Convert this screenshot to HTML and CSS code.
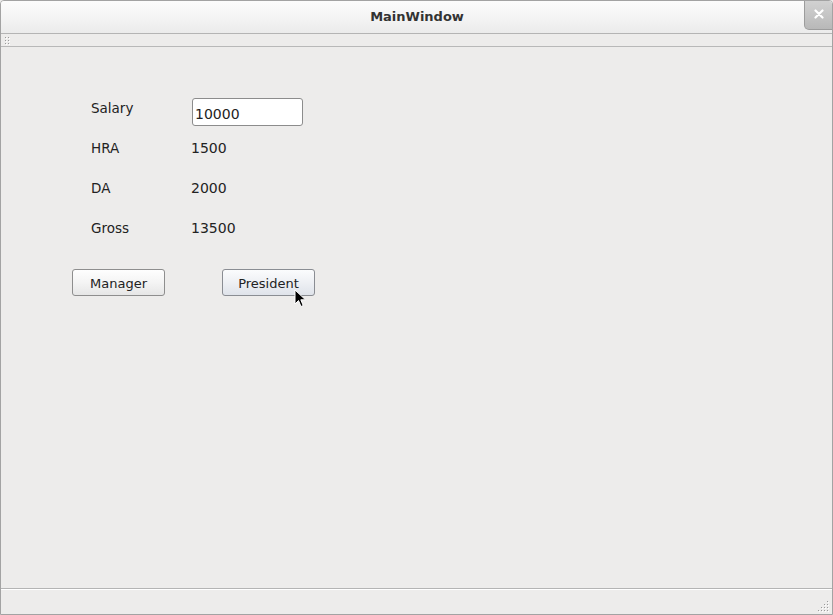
FILE: index.html
```html
<!DOCTYPE html>
<html>
<head>
<meta charset="utf-8">
<title>MainWindow</title>
<link rel="stylesheet" href="styles.css">
</head>
<body>
<div class="window">
  <div class="titlebar">
    <span class="title">MainWindow</span>
    <div class="close">
      <svg width="10" height="10" viewBox="0 0 10 10"><path d="M1.5 1.5 L8.5 8.5 M8.5 1.5 L1.5 8.5" stroke="#ffffff" stroke-width="2.2" stroke-linecap="round"/></svg>
    </div>
  </div>
  <div class="toolbar">
    <svg class="grip" width="6" height="9" viewBox="0 0 6 9">
      <rect x="0" y="0" width="1" height="1" fill="#9a9a9a"/><rect x="1" y="1" width="1" height="1" fill="#ffffff"/>
      <rect x="3" y="0" width="1" height="1" fill="#9a9a9a"/><rect x="4" y="1" width="1" height="1" fill="#ffffff"/>
      <rect x="0" y="3" width="1" height="1" fill="#9a9a9a"/><rect x="1" y="4" width="1" height="1" fill="#ffffff"/>
      <rect x="3" y="3" width="1" height="1" fill="#9a9a9a"/><rect x="4" y="4" width="1" height="1" fill="#ffffff"/>
      <rect x="0" y="6" width="1" height="1" fill="#9a9a9a"/><rect x="1" y="7" width="1" height="1" fill="#ffffff"/>
      <rect x="3" y="6" width="1" height="1" fill="#9a9a9a"/><rect x="4" y="7" width="1" height="1" fill="#ffffff"/>
    </svg>
  </div>
  <div class="content">
    <div class="form">
      <div class="label first">Salary</div>
      <div class="value"><input class="field" type="text" value="10000"></div>
      <div class="label">HRA</div>
      <div class="value">1500</div>
      <div class="label">DA</div>
      <div class="value">2000</div>
      <div class="label">Gross</div>
      <div class="value">13500</div>
    </div>
    <div class="buttons">
      <button class="btn">Manager</button>
      <button class="btn hover">President</button>
    </div>
  </div>
  <div class="statusbar">
    <svg class="sizegrip" width="12" height="12" viewBox="0 0 12 12">
      <rect x="9" y="0" width="1" height="1" fill="#9a9a9a"/><rect x="10" y="1" width="1" height="1" fill="#ffffff"/>
      <rect x="6" y="3" width="1" height="1" fill="#9a9a9a"/><rect x="7" y="4" width="1" height="1" fill="#ffffff"/>
      <rect x="9" y="3" width="1" height="1" fill="#9a9a9a"/><rect x="10" y="4" width="1" height="1" fill="#ffffff"/>
      <rect x="3" y="6" width="1" height="1" fill="#9a9a9a"/><rect x="4" y="7" width="1" height="1" fill="#ffffff"/>
      <rect x="6" y="6" width="1" height="1" fill="#9a9a9a"/><rect x="7" y="7" width="1" height="1" fill="#ffffff"/>
      <rect x="9" y="6" width="1" height="1" fill="#9a9a9a"/><rect x="10" y="7" width="1" height="1" fill="#ffffff"/>
      <rect x="0" y="9" width="1" height="1" fill="#9a9a9a"/><rect x="1" y="10" width="1" height="1" fill="#ffffff"/>
      <rect x="3" y="9" width="1" height="1" fill="#9a9a9a"/><rect x="4" y="10" width="1" height="1" fill="#ffffff"/>
      <rect x="6" y="9" width="1" height="1" fill="#9a9a9a"/><rect x="7" y="10" width="1" height="1" fill="#ffffff"/>
      <rect x="9" y="9" width="1" height="1" fill="#9a9a9a"/><rect x="10" y="10" width="1" height="1" fill="#ffffff"/>
    </svg>
  </div>
  <svg class="cursor" width="14" height="20" viewBox="0 0 14 20">
    <path d="M1 1 L1 15 L4.5 11.5 L7 17.5 L9.2 16.5 L6.8 10.8 L11.5 10.8 Z" fill="#000000" stroke="#ffffff" stroke-width="1" stroke-linejoin="miter"/>
  </svg>
</div>
</body>
</html>
```

FILE: styles.css
```css
html, body {
  margin: 0;
  padding: 0;
  background: #edeceb;
}

.window {
  position: relative;
  width: 833px;
  height: 615px;
  box-sizing: border-box;
  border: 1px solid #a3a3a3;
  border-radius: 4px 4px 0 0;
  overflow: hidden;
  display: flex;
  flex-direction: column;
  background: #edeceb;
  font-family: "DejaVu Sans", sans-serif;
  font-size: 13px;
  color: #222222;
}

.titlebar {
  position: relative;
  height: 32px;
  flex: none;
  border-bottom: 1px solid #b4b4b4;
  background: linear-gradient(to bottom, #fcfcfc 0%, #f6f6f6 40%, #ebebeb 100%);
  display: flex;
  align-items: center;
  justify-content: center;
}

.title {
  font-weight: bold;
  font-size: 13px;
  color: #333333;
  margin-top: -1px;
  padding-left: 1px;
}

.close {
  position: absolute;
  right: -1px;
  top: -1px;
  width: 29px;
  height: 30px;
  box-sizing: border-box;
  border: 1px solid #9c9c9c;
  border-top: none;
  border-radius: 0 0 0 5px;
  background: linear-gradient(to bottom, #d2d2d2 0%, #c3c3c3 60%, #b8b8b8 100%);
  display: flex;
  align-items: center;
  justify-content: center;
}

.close svg {
  display: block;
  margin-top: -1px;
}

.toolbar {
  height: 12px;
  flex: none;
  border-bottom: 1px solid #b8b8b8;
  display: flex;
  align-items: flex-start;
}

.grip {
  display: block;
  margin: 3px 0 0 4px;
}

.content {
  flex: 1;
  padding: 51px 0 0 71px;
}

.form {
  display: grid;
  grid-template-columns: 100px 111px;
  grid-template-rows: 24px 28px 28px 28px;
  row-gap: 12px;
  margin-left: 19px;
}

.label,
.value {
  line-height: 28px;
  white-space: nowrap;
}

.label {
  font-size: 13.5px;
}

.value {
  font-size: 14px;
}

.label.first {
  line-height: 20px;
}

.field {
  display: block;
  box-sizing: border-box;
  width: 111px;
  height: 28px;
  margin: 0 0 0 1px;
  padding: 4px 2px 0 2px;
  border: 1px solid #8c8c8c;
  border-radius: 3px;
  background: #ffffff;
  font-family: "DejaVu Sans", sans-serif;
  font-size: 14px;
  color: #222222;
  outline: none;
}

.buttons {
  display: flex;
  gap: 57px;
  margin-top: 27px;
}

.btn {
  box-sizing: border-box;
  width: 93px;
  height: 27px;
  padding: 2px 0 0 0;
  border: 1px solid #8e8e8e;
  border-radius: 3px;
  background: linear-gradient(to bottom, #fefefe 0%, #f4f4f4 50%, #e6e6e6 100%);
  font-family: "DejaVu Sans", sans-serif;
  font-size: 13px;
  color: #222222;
}

.btn.hover {
  border-color: #8a8d93;
  background: linear-gradient(to bottom, #fbfcfd 0%, #eef0f4 50%, #dfe3ea 100%);
}

.statusbar {
  height: 25px;
  flex: none;
  border-top: 1px solid #b4b4b4;
  box-shadow: inset 0 1px 0 #ffffff;
  display: flex;
  justify-content: flex-end;
  align-items: flex-end;
}

.sizegrip {
  display: block;
  margin: 0 2px 1px 0;
}

.cursor {
  position: absolute;
  left: 293px;
  top: 288px;
}
```
